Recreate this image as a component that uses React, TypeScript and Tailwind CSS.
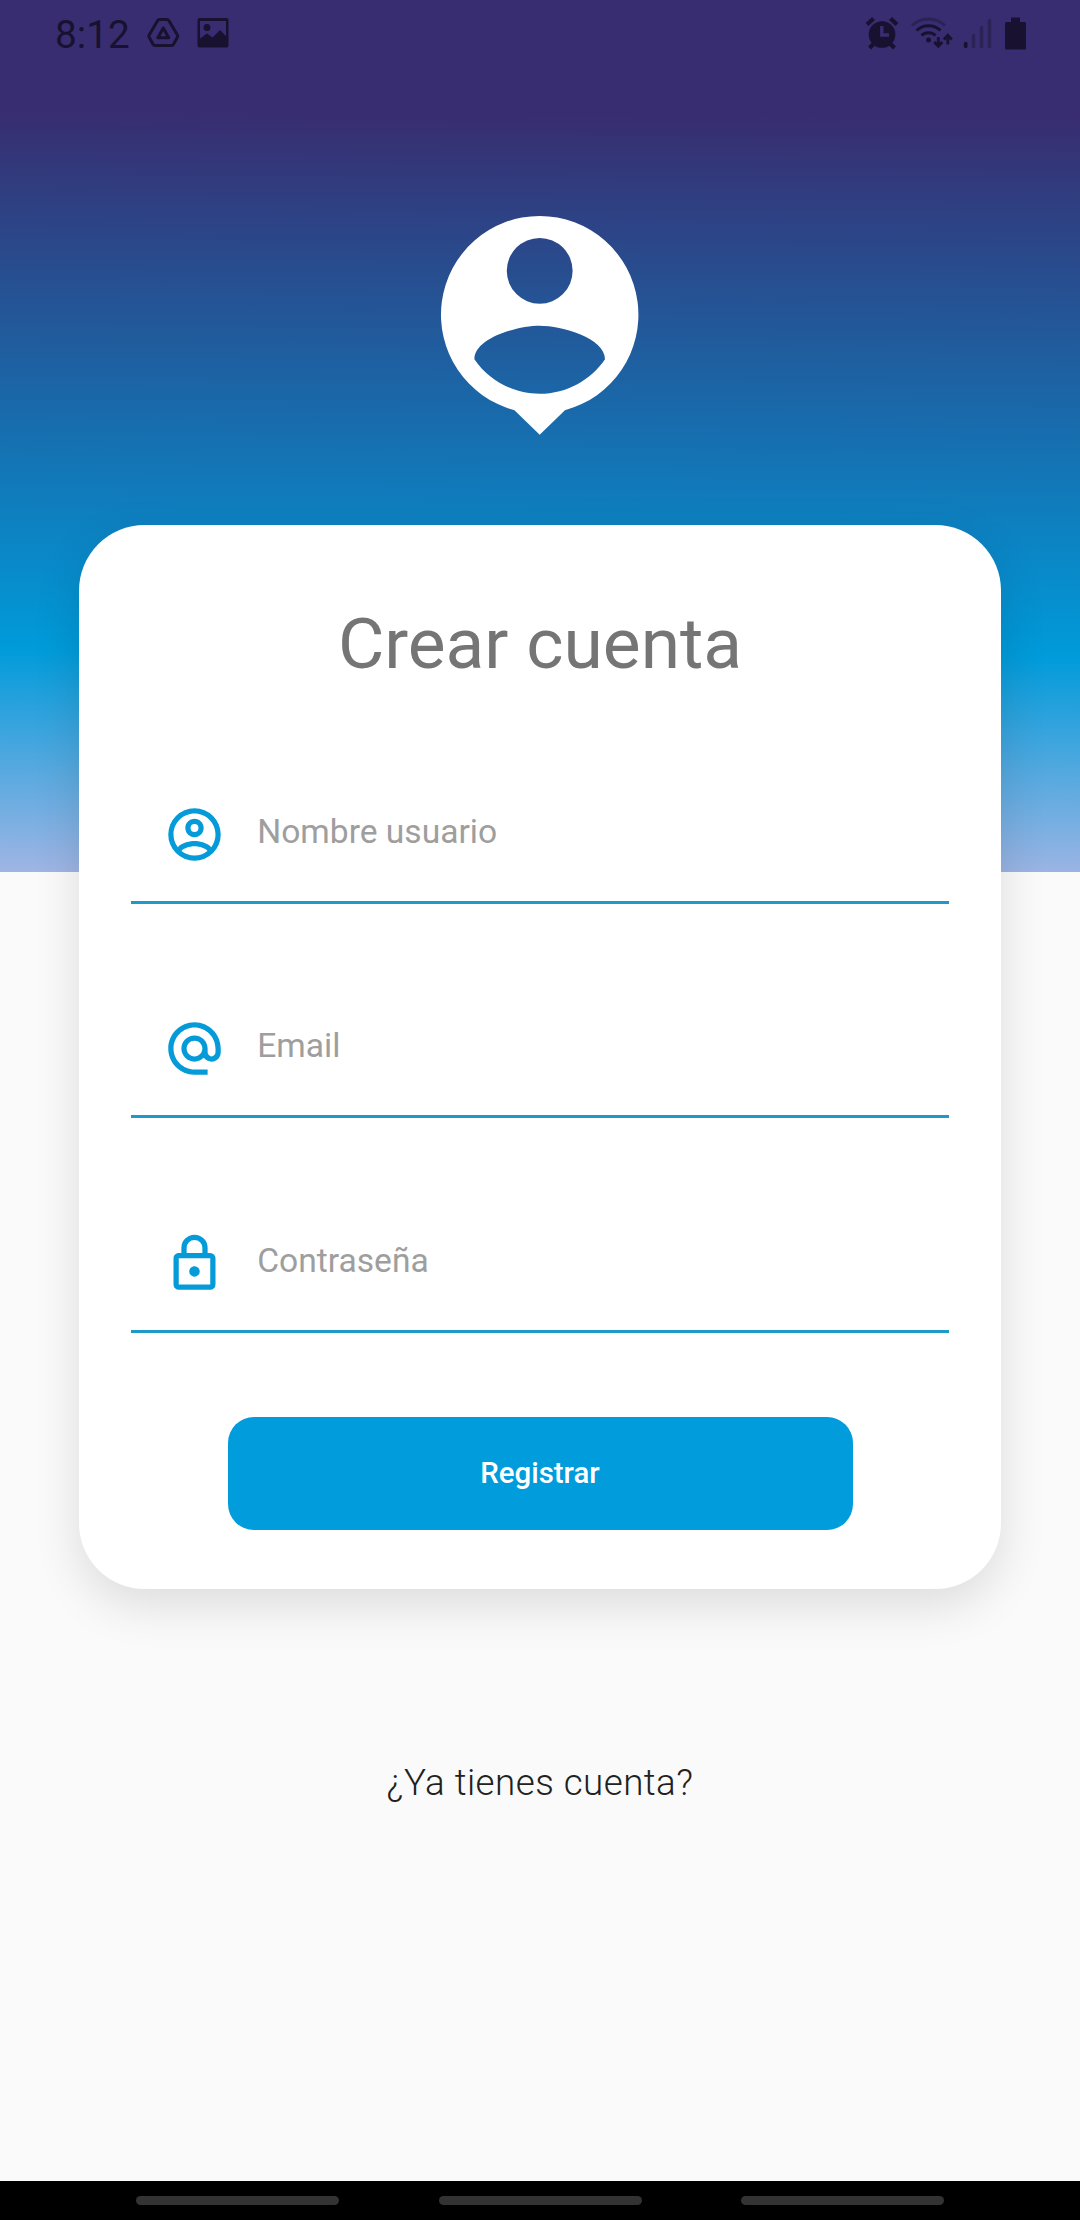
import type { ReactNode } from "react";
import { MdAlternateEmail } from "react-icons/md";

const AccountIcon = () => (
  <svg viewBox="0 0 24 24" className="size-[63px]" fill="currentColor">
    <path d="M12 2A10 10 0 0 0 2 12a10 10 0 0 0 10 10a10 10 0 0 0 10-10A10 10 0 0 0 12 2M7.07 18.28c.43-.9 3.05-1.78 4.93-1.78s4.5.88 4.93 1.78A7.9 7.9 0 0 1 12 20c-1.86 0-3.57-.64-4.93-1.72m11.29-1.45c-1.43-1.74-4.9-2.33-6.36-2.33s-4.93.59-6.36 2.33A7.93 7.93 0 0 1 4 12c0-4.41 3.59-8 8-8s8 3.59 8 8c0 1.82-.62 3.5-1.64 4.83M12 6c-1.94 0-3.5 1.56-3.5 3.5S10.06 13 12 13s3.5-1.56 3.5-3.5S13.94 6 12 6m0 5a1.5 1.5 0 0 1-1.5-1.5A1.5 1.5 0 0 1 12 8a1.5 1.5 0 0 1 1.5 1.5A1.5 1.5 0 0 1 12 11" />
  </svg>
);

const LockIcon = () => (
  <svg viewBox="0 0 24 24" className="size-[63px]" fill="currentColor">
    <path d="M12 17a2 2 0 0 1-2-2c0-1.11.89-2 2-2a2 2 0 0 1 2 2 2 2 0 0 1-2 2m6 3V10H6v10h12m0-12a2 2 0 0 1 2 2v10a2 2 0 0 1-2 2H6a2 2 0 0 1-2-2V10c0-1.11.89-2 2-2h1V6a5 5 0 0 1 5-5 5 5 0 0 1 5 5v2h1m-6-5a3 3 0 0 0-3 3v2h6V6a3 3 0 0 0-3-3z" />
  </svg>
);

const PinLogo = () => (
  <svg viewBox="0 0 24 24" className="size-[263.4px] shrink-0 text-white" fill="currentColor" fillRule="evenodd">
    <path d="M12 2a9 9 0 0 0-2.3 17.7L12 21.93l2.3-2.23A9 9 0 0 0 12 2m0 2a3 3 0 1 1 0 6 3 3 0 0 1 0-6m0 14.2c-2.5 0-4.7-1.3-5.95-3.15C6.05 13.1 10 12 12 12s5.95 1.1 5.95 3.05C16.7 16.9 14.5 18.2 12 18.2" />
  </svg>
);

const DriveIcon = () => (
  <svg viewBox="0 0 34 30" className="h-[30px] w-[34px]" fill="none" stroke="currentColor" strokeWidth="3" strokeLinejoin="round">
    <path d="M12.500 1.600h7.500q1.200 0 1.800 1L30.400 17q.600 1.200 0 2.200l-4 7.200q-.600 1-1.800 1H8q-1.200 0-1.800-1l-4-7.200q-.600-1 0-2.200L10.700 2.600q.600-1 1.800-1z" />
    <path d="M16.300 10l5.400 9.800H10.900z" />
  </svg>
);

const PictureIcon = () => (
  <svg viewBox="0 0 32 30" className="h-[30px] w-8">
    <path
      fill="currentColor"
      fillRule="evenodd"
      d="M2.500 0h27A2 2 0 0 1 31.500 2v25.500a2 2 0 0 1-2 2h-27a2 2 0 0 1-2-2V2a2 2 0 0 1 2-2M3 3v17.500l7-5 5.500 4L23 12l6 6V3zM10 6a3.500 3.500 0 1 1 0 7 3.500 3.500 0 0 1 0-7"
    />
  </svg>
);

const StatusIcons = () => (
  <svg viewBox="864 14 164 36" className="h-9 w-[164px]" fill="none" stroke="currentColor">
    <circle cx="881" cy="33.500" r="13.300" fill="currentColor" stroke="none" />
    <path strokeWidth="4.200" d="M866 23.500l6.500-6M896 23.500l-6.500-6M868.500 47l5-5M893.500 47l-5-5" />
    <path stroke="#382d70" strokeWidth="3.400" d="M880.800 25v9h7.200" />
    <path strokeWidth="3" opacity=".4" d="M911 24.500a24 24 0 0 1 33 0" />
    <path strokeWidth="3" d="M915.500 29.500a17.500 17.500 0 0 1 24 0M920.500 34.500a10 10 0 0 1 14 0" />
    <circle cx="927.500" cy="39" r="2.500" fill="currentColor" stroke="none" />
    <path strokeWidth="2.800" d="M937.300 36v9M933.300 41l4 4.300 4-4.300M946.800 43.500V34.500M942.800 38.500l4-4.300 4 4.300" />
    <path strokeWidth="3.600" strokeLinecap="round" d="M964.700 42.500v3" />
    <path strokeWidth="3.400" strokeLinecap="round" opacity=".4" d="M972.500 34.500v11M980.500 26.500v19M988.500 19.500v26" />
    <path fill="currentColor" stroke="none" d="M1010 16.500h9V21h4.500a1.500 1.500 0 0 1 1.500 1.500V47a1.500 1.500 0 0 1-1.500 1.500h-18A1.500 1.500 0 0 1 1004 47V22.500a1.500 1.500 0 0 1 1.500-1.500h4.500z" />
  </svg>
);

const Field = ({ icon, label }: { icon: ReactNode; label: string }) => (
  <div className="flex h-[214.600px] flex-col justify-end">
    <div className="flex h-[98px] items-start pl-[32px]">
      <span className="text-[#049bd8]">{icon}</span>
      <span className="mt-[9px] ml-[31.500px] text-[33.600px] leading-[40px] text-[#9e9e9e]">{label}</span>
    </div>
    <div className="h-[3px] bg-[#1f9ac8]" />
  </div>
);

export default function App() {
  return (
    <div className="flex h-[2220px] w-[1080px] flex-col bg-[#fafafa] font-[Roboto,sans-serif]">
      <div className="flex h-[2181px] flex-col items-center">
        <header className="flex h-[872px] w-full shrink-0 flex-col items-center bg-[linear-gradient(180.400deg,#382d70_0px,#382d70_118px,#009bda_656px,#a0b5e4_880px)]">
          <div className="flex h-[66px] w-full items-center justify-between pr-[51px] pl-[55px] text-[#18112f]">
            <div className="flex items-center">
              <span className="w-[92px] pt-[3px] text-[38.800px] leading-[46px]">8:12</span>
              <DriveIcon />
              <span className="ml-4">
                <PictureIcon />
              </span>
            </div>
            <StatusIcons />
          </div>
          <div className="mt-[128px]">
            <PinLogo />
          </div>
        </header>

        <main className="relative -mt-[347px] flex h-[1064px] w-[922.500px] shrink-0 flex-col rounded-[65.600px] bg-white px-[52px] shadow-[0_16px_48px_rgba(0,0,0,0.12)]">
          <h1 className="mt-[77px] text-center text-[71.300px] leading-[84px] text-[#757575]">Crear cuenta</h1>
          <form className="mt-[3.250px] flex flex-col">
            <Field icon={<AccountIcon />} label="Nombre usuario" />
            <Field icon={<MdAlternateEmail className="size-[63px]" />} label="Email" />
            <Field icon={<LockIcon />} label="Contraseña" />
            <button
              type="button"
              className="mt-[83.500px] h-[113px] w-[625px] self-center rounded-[26px] bg-[#009cdb] text-[29.400px] leading-[34px] font-medium text-white"
            >
              Registrar
            </button>
          </form>
        </main>

        <a className="mt-[172px] text-[36.750px] leading-[44px] font-light tracking-[0.450px] text-[#212121]">¿Ya tienes cuenta?</a>
      </div>
      <nav className="flex h-[39px] items-center justify-center gap-[99.500px] bg-black">
        <span className="h-[9px] w-[203px] rounded-full bg-[#333]" />
        <span className="h-[9px] w-[203px] rounded-full bg-[#333]" />
        <span className="h-[9px] w-[203px] rounded-full bg-[#333]" />
      </nav>
    </div>
  );
}
